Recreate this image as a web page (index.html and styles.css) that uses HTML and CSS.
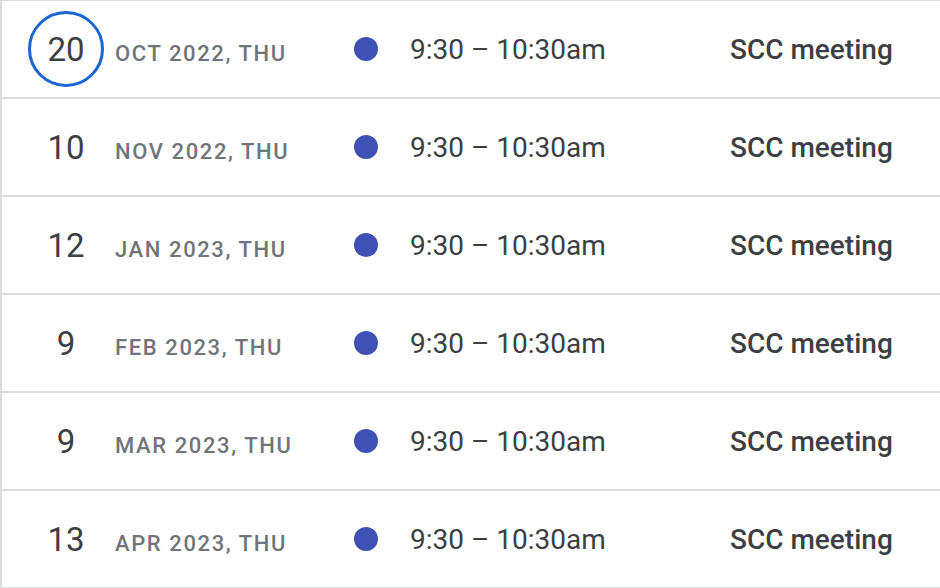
FILE: index.html
```html
<!DOCTYPE html>
<html lang="en">
<head>
<meta charset="utf-8">
<title>Agenda</title>
<link rel="stylesheet" href="styles.css">
</head>
<body>
<div class="agenda">
  <div class="row">
    <div class="day today"><span>20</span></div>
    <div class="date">Oct 2022, Thu</div>
    <div class="dot-cell"><span class="dot"></span></div>
    <div class="time">9:30 – 10:30am</div>
    <div class="title">SCC meeting</div>
  </div>
  <div class="row">
    <div class="day"><span>10</span></div>
    <div class="date">Nov 2022, Thu</div>
    <div class="dot-cell"><span class="dot"></span></div>
    <div class="time">9:30 – 10:30am</div>
    <div class="title">SCC meeting</div>
  </div>
  <div class="row">
    <div class="day"><span>12</span></div>
    <div class="date">Jan 2023, Thu</div>
    <div class="dot-cell"><span class="dot"></span></div>
    <div class="time">9:30 – 10:30am</div>
    <div class="title">SCC meeting</div>
  </div>
  <div class="row">
    <div class="day"><span>9</span></div>
    <div class="date">Feb 2023, Thu</div>
    <div class="dot-cell"><span class="dot"></span></div>
    <div class="time">9:30 – 10:30am</div>
    <div class="title">SCC meeting</div>
  </div>
  <div class="row">
    <div class="day"><span>9</span></div>
    <div class="date">Mar 2023, Thu</div>
    <div class="dot-cell"><span class="dot"></span></div>
    <div class="time">9:30 – 10:30am</div>
    <div class="title">SCC meeting</div>
  </div>
  <div class="row">
    <div class="day"><span>13</span></div>
    <div class="date">Apr 2023, Thu</div>
    <div class="dot-cell"><span class="dot"></span></div>
    <div class="time">9:30 – 10:30am</div>
    <div class="title">SCC meeting</div>
  </div>
</div>
</body>
</html>
```

FILE: styles.css
```css
html, body {
  margin: 0;
  padding: 0;
  background: #ffffff;
}

body {
  font-family: Roboto, "Noto Sans", "Liberation Sans", sans-serif;
  color: #3c4043;
  overflow: hidden;
}

.agenda {
  margin-top: -1px;
  border-top: 2px solid #dadce0;
  border-left: 2px solid #dadce0;
}

.row {
  display: grid;
  grid-template-columns: 87px 239px 56px 320px 1fr;
  align-items: center;
  height: 96px;
  padding-left: 26px;
  border-bottom: 2px solid #dadce0;
  box-sizing: content-box;
}

.day {
  width: 76px;
  height: 76px;
  box-sizing: border-box;
  display: flex;
  align-items: center;
  justify-content: center;
  font-size: 33px;
  font-weight: 400;
  color: #3c4043;
  border-radius: 50%;
  border: 3px solid transparent;
}

.day.today {
  border-color: #1b66d1;
}

.date {
  font-size: 22px;
  font-weight: 500;
  letter-spacing: 1.6px;
  text-transform: uppercase;
  color: #70757a;
  padding-top: 9px;
}

.dot-cell {
  display: flex;
  align-items: center;
}

.dot {
  width: 24px;
  height: 24px;
  border-radius: 50%;
  background: #3f51b5;
}

.time {
  font-size: 28px;
  font-weight: 400;
  color: #3c4043;
  white-space: nowrap;
}

.title {
  font-size: 28px;
  font-weight: 500;
  color: #3c4043;
  white-space: nowrap;
}
```
